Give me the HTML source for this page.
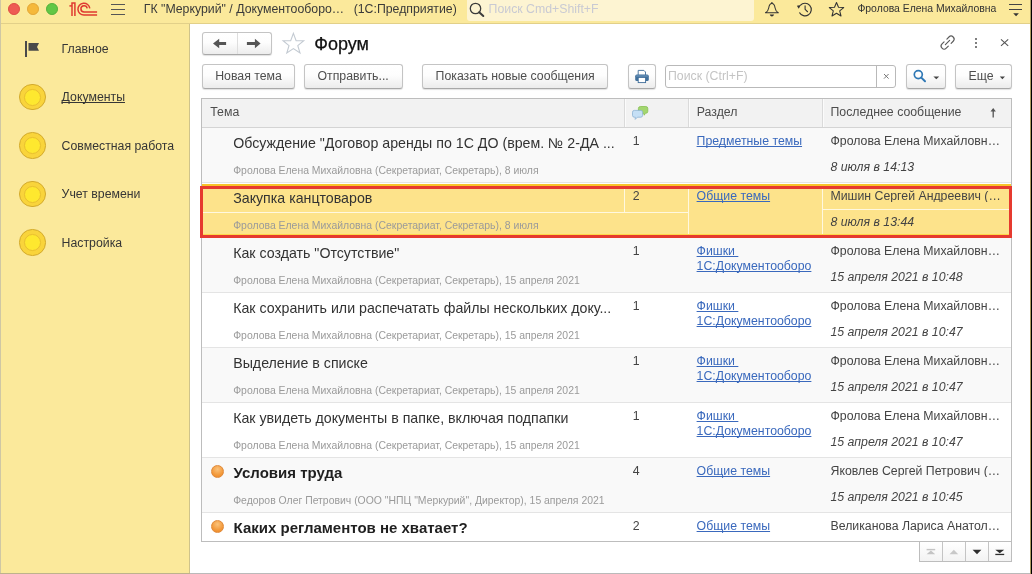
<!DOCTYPE html>
<html><head><meta charset="utf-8">
<style>
html,body{margin:0;padding:0;width:1032px;height:574px;overflow:hidden;background:#fff;}
body{position:relative;font-family:"Liberation Sans",sans-serif;}
.t{position:absolute;white-space:nowrap;text-decoration-skip-ink:none;}
#w{position:absolute;left:0;top:0;width:1032px;height:574px;will-change:transform;}
</style></head><body>
<div id="w"><div style="position:absolute;left:0px;top:0px;width:1032px;height:23px;background:#fbe99b"></div>
<div style="position:absolute;left:0px;top:23px;width:1032px;height:1px;background:#e2d089"></div>
<div style="position:absolute;left:0px;top:0px;width:1px;height:574px;background:#cfc7a4"></div>
<div style="position:absolute;left:8.10px;top:3.1px;width:11.8px;height:11.8px;box-sizing:border-box;border-radius:50%;background:#ee5b53;border:0.6px solid #de4a43"></div>
<div style="position:absolute;left:27.20px;top:3.1px;width:11.8px;height:11.8px;box-sizing:border-box;border-radius:50%;background:#f5b93b;border:0.6px solid #e3a634"></div>
<div style="position:absolute;left:46.20px;top:3.1px;width:11.8px;height:11.8px;box-sizing:border-box;border-radius:50%;background:#62c745;border:0.6px solid #52b039"></div>
<svg style="position:absolute;left:66px;top:0px" width="34" height="18" viewBox="66 0 34 18">
<g fill="none" stroke="#df3a31" stroke-width="1.5">
<path d="M69.4 5.9 H72"/>
<path d="M72 15.9 V2.95 H74.9 V15.9"/>
<path d="M89.8 8.4 A5.95 5.95 0 1 0 84 15.1 H97.1"/>
<path d="M87.2 8.4 A3.15 3.15 0 1 0 84 11.95 H97.1"/>
</g></svg>
<div style="position:absolute;left:110.5px;top:4.2px;width:14px;height:1.3px;background:#555"></div>
<div style="position:absolute;left:110.5px;top:9px;width:14px;height:1.3px;background:#555"></div>
<div style="position:absolute;left:110.5px;top:13.8px;width:14px;height:1.3px;background:#555"></div>
<div class="t" style="left:143.80px;top:3px;font-size:12.3px;line-height:12.3px;color:#3a3a3a;">ГК "Меркурий" / Документооборо…</div>
<div class="t" style="left:353.70px;top:3px;font-size:12.3px;line-height:12.3px;color:#3a3a3a;">(1С:Предприятие)</div>
<div style="position:absolute;left:467px;top:0px;width:286.5px;height:21px;background:#fdf4d2;border-radius:0 0 3px 3px"></div>
<svg style="position:absolute;left:468px;top:1px" width="18" height="18" viewBox="0 0 18 18">
<circle cx="7.5" cy="7.5" r="5.2" fill="none" stroke="#3c3c3c" stroke-width="1.3"/>
<path d="M11.2 11.2 L15.3 15" stroke="#3c3c3c" stroke-width="2" stroke-linecap="round"/></svg>
<div class="t" style="left:488.60px;top:3px;font-size:12.3px;line-height:12.3px;color:#c9cad3;">Поиск Cmd+Shift+F</div>
<svg style="position:absolute;left:760px;top:0px" width="24" height="20" viewBox="760 0 24 20">
<circle cx="771.9" cy="2.9" r="0.8" fill="#333"/>
<path d="M771.9 3.5 C769.7 3.5 769.1 5.4 768.7 8 C768.3 10.5 767.2 11.8 765.5 12.8 H778.3 C776.6 11.8 775.5 10.5 775.1 8 C774.7 5.4 774.1 3.5 771.9 3.5 Z" fill="none" stroke="#333" stroke-width="1.05" stroke-linejoin="round"/>
<path d="M769.7 14.4 H774.1 Q773.4 16.5 771.9 16.6 Q770.4 16.5 769.7 14.4 Z" fill="#333"/></svg>
<svg style="position:absolute;left:794px;top:0px" width="20" height="20" viewBox="794 0 20 20">
<path d="M800.3 5.3 A6.3 6.3 0 1 1 799.4 12.5" fill="none" stroke="#333" stroke-width="1.15"/>
<path d="M796.9 5.7 L800.9 4.9 L798.7 8.7 Z" fill="#333"/>
<path d="M805.1 5.6 V9.3 L807.8 12" fill="none" stroke="#333" stroke-width="1.1"/></svg>
<svg style="position:absolute;left:828px;top:1px" width="17" height="17" viewBox="0 0 17 17">
<path d="M8.5 1.5 L10.5 6.3 L15.7 6.6 L11.7 9.9 L13 15 L8.5 12.2 L4 15 L5.3 9.9 L1.3 6.6 L6.5 6.3 Z" fill="none" stroke="#333" stroke-width="1.05" stroke-linejoin="round"/></svg>
<div class="t" style="left:857.40px;top:4px;font-size:10.43px;line-height:10.43px;color:#333;">Фролова Елена Михайловна</div>
<div style="position:absolute;left:1009px;top:4px;width:13px;height:1.3px;background:#444"></div>
<div style="position:absolute;left:1009px;top:8.5px;width:13px;height:1.3px;background:#444"></div>
<svg style="position:absolute;left:1012px;top:12px" width="8" height="5" viewBox="0 0 8 5"><path d="M1.2 1.2 H6.9 L4.05 4.3 Z" fill="#333"/></svg>
<div style="position:absolute;left:1px;top:24px;width:188px;height:549px;background:#fbe99b"></div>
<div style="position:absolute;left:189px;top:24px;width:1px;height:549px;background:#cfc38b"></div>
<div style="position:absolute;left:25.3px;top:41px;width:2px;height:15.5px;background:#4a4a4a"></div>
<svg style="position:absolute;left:28px;top:43px" width="12" height="8" viewBox="0 0 12 8"><path d="M0.5 0 H11 L9 3.9 L11 7.8 H0.5 Z" fill="#4a4a4a"/></svg>
<div class="t" style="left:61.60px;top:43px;font-size:12.3px;line-height:12.3px;color:#363636;">Главное</div>
<div class="t" style="left:61.60px;top:91px;font-size:12.3px;line-height:12.3px;color:#363636;text-decoration:underline;text-underline-offset:0.5px">Документы</div>
<div style="position:absolute;left:19.15px;top:83.95px;width:24.5px;height:24.5px;border-radius:50%;background:#f9d43b;border:1px solid #d3aa2c"></div>
<div style="position:absolute;left:23.90px;top:88.80px;width:16.8px;height:16.8px;box-sizing:border-box;border-radius:50%;background:#fee82f;border:0.9px solid #e9bf30"></div>
<div class="t" style="left:61.60px;top:140px;font-size:12.3px;line-height:12.3px;color:#363636;">Совместная работа</div>
<div style="position:absolute;left:19.15px;top:132.45px;width:24.5px;height:24.5px;border-radius:50%;background:#f9d43b;border:1px solid #d3aa2c"></div>
<div style="position:absolute;left:23.90px;top:137.30px;width:16.8px;height:16.8px;box-sizing:border-box;border-radius:50%;background:#fee82f;border:0.9px solid #e9bf30"></div>
<div class="t" style="left:61.60px;top:188px;font-size:12.3px;line-height:12.3px;color:#363636;">Учет времени</div>
<div style="position:absolute;left:19.15px;top:180.95px;width:24.5px;height:24.5px;border-radius:50%;background:#f9d43b;border:1px solid #d3aa2c"></div>
<div style="position:absolute;left:23.90px;top:185.80px;width:16.8px;height:16.8px;box-sizing:border-box;border-radius:50%;background:#fee82f;border:0.9px solid #e9bf30"></div>
<div class="t" style="left:61.60px;top:237px;font-size:12.3px;line-height:12.3px;color:#363636;">Настройка</div>
<div style="position:absolute;left:19.15px;top:229.45px;width:24.5px;height:24.5px;border-radius:50%;background:#f9d43b;border:1px solid #d3aa2c"></div>
<div style="position:absolute;left:23.90px;top:234.30px;width:16.8px;height:16.8px;box-sizing:border-box;border-radius:50%;background:#fee82f;border:0.9px solid #e9bf30"></div>
<div style="position:absolute;left:201.5px;top:32px;width:70px;height:22.5px;background:linear-gradient(#ffffff,#fdfdfd 45%,#ececec);border:1px solid #c4c4c4;border-bottom-color:#a8a8a8;border-radius:3px;box-shadow:0 1px 1px rgba(0,0,0,0.12);box-sizing:border-box;"></div>
<div style="position:absolute;left:237px;top:33px;width:1px;height:21px;background:#dedede"></div>
<svg style="position:absolute;left:210px;top:36px" width="20" height="15" viewBox="210 36 20 15"><path d="M213 43.5 L219.2 38.7 V42 H226.1 V45 H219.2 V48.3 Z" fill="#555"/></svg>
<svg style="position:absolute;left:244px;top:36px" width="20" height="15" viewBox="244 36 20 15"><path d="M260.6 43.5 L254.9 38.7 V42 H246.9 V45 H254.9 V48.3 Z" fill="#555"/></svg>
<svg style="position:absolute;left:280px;top:31px" width="26" height="25" viewBox="280 31 26 25"><path d="M293.4 33.4 L296.1 40.6 L303.7 40.8 L297.8 45.6 L300 53 L293.4 48.6 L286.8 53 L289 45.6 L283.1 40.8 L290.7 40.6 Z" fill="none" stroke="#c3cad2" stroke-width="1.1" stroke-linejoin="miter"/></svg>
<div class="t" style="left:314.30px;top:35px;font-size:18px;line-height:18px;color:#111;-webkit-text-stroke:0.25px #111">Форум</div>
<svg style="position:absolute;left:936px;top:31px" width="24" height="23" viewBox="936 31 24 23"><g transform="translate(947.6 42.6) rotate(-45)" fill="none" stroke="#5a5a5a" stroke-width="1.15" stroke-linecap="round"><path d="M-2 -3 H-4.9 A3 3 0 0 0 -4.9 3 H-2"/><path d="M2 -3 H4.9 A3 3 0 0 1 4.9 3 H2"/><path d="M-3 -0.15 H3"/></g></svg>
<div style="position:absolute;left:974.6999999999999px;top:37.699999999999996px;width:2.4px;height:2.4px;border-radius:50%;background:#555"></div>
<div style="position:absolute;left:974.6999999999999px;top:41.8px;width:2.4px;height:2.4px;border-radius:50%;background:#555"></div>
<div style="position:absolute;left:974.6999999999999px;top:45.699999999999996px;width:2.4px;height:2.4px;border-radius:50%;background:#555"></div>
<svg style="position:absolute;left:999px;top:38px" width="11" height="9" viewBox="999 38 11 9"><path d="M1001 39.4 L1008.2 45.9 M1008.2 39.4 L1001 45.9" stroke="#555" stroke-width="1.1"/></svg>
<div style="position:absolute;left:201.5px;top:64.3px;width:93.0px;height:24.4px;background:linear-gradient(#ffffff,#fdfdfd 45%,#ececec);border:1px solid #c4c4c4;border-bottom-color:#a8a8a8;border-radius:3px;box-shadow:0 1px 1px rgba(0,0,0,0.12);box-sizing:border-box;"></div>
<div class="t" style="left:215.20px;top:70px;font-size:12.3px;line-height:12.3px;color:#4e4e4e;">Новая тема</div>
<div style="position:absolute;left:303.7px;top:64.3px;width:99.10000000000002px;height:24.4px;background:linear-gradient(#ffffff,#fdfdfd 45%,#ececec);border:1px solid #c4c4c4;border-bottom-color:#a8a8a8;border-radius:3px;box-shadow:0 1px 1px rgba(0,0,0,0.12);box-sizing:border-box;"></div>
<div class="t" style="left:317.50px;top:70px;font-size:12.3px;line-height:12.3px;color:#4e4e4e;">Отправить...</div>
<div style="position:absolute;left:422.3px;top:64.3px;width:185.7px;height:24.4px;background:linear-gradient(#ffffff,#fdfdfd 45%,#ececec);border:1px solid #c4c4c4;border-bottom-color:#a8a8a8;border-radius:3px;box-shadow:0 1px 1px rgba(0,0,0,0.12);box-sizing:border-box;"></div>
<div class="t" style="left:435.60px;top:70px;font-size:12.3px;line-height:12.3px;color:#4e4e4e;">Показать новые сообщения</div>
<div style="position:absolute;left:628.1px;top:64.3px;width:28.100000000000023px;height:24.4px;background:linear-gradient(#ffffff,#fdfdfd 45%,#ececec);border:1px solid #c4c4c4;border-bottom-color:#a8a8a8;border-radius:3px;box-shadow:0 1px 1px rgba(0,0,0,0.12);box-sizing:border-box;"></div>
<svg style="position:absolute;left:633px;top:68px" width="18" height="17" viewBox="633 68 18 17"><path d="M638.2 75 V70.4 H643.9 L645.5 72 V75" fill="#fff" stroke="#3f6d99" stroke-width="0.9"/><rect x="635.2" y="74.6" width="13.6" height="6.4" rx="1.6" fill="#41709c"/><rect x="636.2" y="75.4" width="11.6" height="1.2" fill="#6d95bb"/><rect x="638.2" y="77.4" width="7.4" height="5.2" fill="#fff" stroke="#3f6d99" stroke-width="0.9"/></svg>
<div style="position:absolute;left:665.3px;top:65.2px;width:231.2px;height:22.6px;background:#fff;border:1px solid #b9b9b9;border-radius:3px;box-sizing:border-box"></div>
<div style="position:absolute;left:876.2px;top:66px;width:1px;height:21px;background:#b9b9b9"></div>
<div class="t" style="left:668.00px;top:70px;font-size:12.3px;line-height:12.3px;color:#c4c4c4;">Поиск (Ctrl+F)</div>
<svg style="position:absolute;left:882px;top:72px" width="9" height="9" viewBox="882 72 9 9"><path d="M884 74 L888.6 78.6 M888.6 74 L884 78.6" stroke="#777" stroke-width="1"/></svg>
<div style="position:absolute;left:906.4px;top:64.3px;width:39.200000000000045px;height:24.4px;background:linear-gradient(#ffffff,#fdfdfd 45%,#ececec);border:1px solid #c4c4c4;border-bottom-color:#a8a8a8;border-radius:3px;box-shadow:0 1px 1px rgba(0,0,0,0.12);box-sizing:border-box;"></div>
<svg style="position:absolute;left:912px;top:69px" width="16" height="15" viewBox="912 69 16 15"><circle cx="918.3" cy="74.6" r="4" fill="none" stroke="#2f78b5" stroke-width="1.7"/><path d="M921.3 77.6 L925 81.2" stroke="#2f78b5" stroke-width="2" stroke-linecap="round"/></svg>
<svg style="position:absolute;left:932px;top:75px" width="8" height="5" viewBox="932 75 8 5"><path d="M933.4 76.6 H939.2 L936.3 79.2 Z" fill="#444"/></svg>
<div style="position:absolute;left:955px;top:64.3px;width:56.60000000000002px;height:24.4px;background:linear-gradient(#ffffff,#fdfdfd 45%,#ececec);border:1px solid #c4c4c4;border-bottom-color:#a8a8a8;border-radius:3px;box-shadow:0 1px 1px rgba(0,0,0,0.12);box-sizing:border-box;"></div>
<div class="t" style="left:968.60px;top:70px;font-size:12.3px;line-height:12.3px;color:#4e4e4e;">Еще</div>
<svg style="position:absolute;left:999px;top:75px" width="8" height="5" viewBox="999 75 8 5"><path d="M999.8 76.6 H1005 L1002.4 79.2 Z" fill="#444"/></svg>
<div style="position:absolute;left:201px;top:98px;width:811px;height:444px;background:#fff;border:1px solid #bdbdbd;box-sizing:border-box"></div>
<div style="position:absolute;left:202px;top:99px;width:809px;height:28px;background:#f2f2f2"></div>
<div style="position:absolute;left:202px;top:127px;width:809px;height:1px;background:#d4d4d4"></div>
<div style="position:absolute;left:624px;top:99px;width:1px;height:28px;background:#dadada"></div>
<div style="position:absolute;left:625px;top:99px;width:1px;height:28px;background:#fbfbfb"></div>
<div style="position:absolute;left:688px;top:99px;width:1px;height:28px;background:#dadada"></div>
<div style="position:absolute;left:689px;top:99px;width:1px;height:28px;background:#fbfbfb"></div>
<div style="position:absolute;left:822px;top:99px;width:1px;height:28px;background:#dadada"></div>
<div style="position:absolute;left:823px;top:99px;width:1px;height:28px;background:#fbfbfb"></div>
<div class="t" style="left:210.30px;top:106px;font-size:12.3px;line-height:12.3px;color:#4d4d4d;">Тема</div>
<div class="t" style="left:696.80px;top:106px;font-size:12.3px;line-height:12.3px;color:#4d4d4d;">Раздел</div>
<div class="t" style="left:830.50px;top:106px;font-size:12.3px;line-height:12.3px;color:#4d4d4d;">Последнее сообщение</div>
<svg style="position:absolute;left:988px;top:106px" width="10" height="13" viewBox="988 106 10 13"><path d="M993.2 107.9 L995.9 111.4 H993.85 V117.4 H992.55 V111.4 H990.5 Z" fill="#555"/></svg>
<svg style="position:absolute;left:630px;top:104px" width="20" height="18" viewBox="630 104 20 18"><path d="M640.4 106.5 H645.8 A2 2 0 0 1 647.8 108.5 V111.3 A2 2 0 0 1 645.8 113.3 H645.3 L644.3 115.2 L643.5 113.3 H640.4 A2 2 0 0 1 638.4 111.3 V108.5 A2 2 0 0 1 640.4 106.5 Z" fill="#a3d66f" stroke="#86c052" stroke-width="0.8"/><path d="M634.3 110.4 H640.8 A1.8 1.8 0 0 1 642.6 112.2 V115.4 A1.8 1.8 0 0 1 640.8 117.2 H637.4 L635.2 119.4 L635.3 117.2 H634.3 A1.8 1.8 0 0 1 632.5 115.4 V112.2 A1.8 1.8 0 0 1 634.3 110.4 Z" fill="#c5dff5" stroke="#8db3d3" stroke-width="0.8"/></svg>
<div style="position:absolute;left:202px;top:128px;width:809px;height:412px;overflow:hidden">
<div style="position:absolute;left:0px;top:0px;width:809px;height:54px;background:#f9f9f9"></div>
<div style="position:absolute;left:0px;top:54px;width:809px;height:1px;background:#e4e4e4"></div>
<div class="t" style="left:31.20px;top:8px;font-size:14.2px;line-height:14.2px;color:#333;">Обсуждение "Договор аренды по 1С ДО (врем. № 2-ДА ...</div>
<div class="t" style="left:31.20px;top:38px;font-size:10.43px;line-height:10.43px;color:#9a9a9a;">Фролова Елена Михайловна (Секретариат, Секретарь), 8 июля</div>
<div class="t" style="left:430.80px;top:7px;font-size:12.3px;line-height:12.3px;color:#444;">1</div>
<div class="t" style="left:494.60px;top:7px;font-size:12.3px;line-height:12.3px;color:#3a69bd;text-decoration:underline;text-underline-offset:1px">Предметные темы</div>
<div class="t" style="left:628.5px;top:7px;width:172px;overflow:hidden;text-overflow:ellipsis;font-size:12.3px;line-height:12.3px;color:#444">Фролова Елена Михайловна (Секретариат)</div>
<div class="t" style="left:628.50px;top:33px;font-size:12.3px;line-height:12.3px;color:#444;font-style:italic">8 июля в 14:13</div>
<div style="position:absolute;left:0px;top:55px;width:809px;height:54px;background:#fde38b"></div>
<div style="position:absolute;left:0px;top:109px;width:809px;height:1px;background:#e4e4e4"></div>
<div style="position:absolute;left:0px;top:55px;width:809px;height:1px;background:#ffffff"></div>
<div style="position:absolute;left:0px;top:56px;width:809px;height:2px;background:#f8c42a"></div>
<div style="position:absolute;left:0px;top:106px;width:809px;height:1px;background:#fdd84a"></div>
<div style="position:absolute;left:422px;top:58px;width:1px;height:26px;background:#fff8e0"></div>
<div style="position:absolute;left:0px;top:84px;width:486px;height:1px;background:#fff8e0"></div>
<div style="position:absolute;left:486px;top:58px;width:1px;height:48px;background:#fff8e0"></div>
<div style="position:absolute;left:620px;top:58px;width:1px;height:48px;background:#fff8e0"></div>
<div style="position:absolute;left:621px;top:81px;width:188px;height:1px;background:#fff8e0"></div>
<div class="t" style="left:31.20px;top:63px;font-size:14.2px;line-height:14.2px;color:#333;">Закупка канцтоваров</div>
<div class="t" style="left:31.20px;top:93px;font-size:10.43px;line-height:10.43px;color:#9a9a9a;">Фролова Елена Михайловна (Секретариат, Секретарь), 8 июля</div>
<div class="t" style="left:430.80px;top:62px;font-size:12.3px;line-height:12.3px;color:#444;">2</div>
<div class="t" style="left:494.60px;top:62px;font-size:12.3px;line-height:12.3px;color:#3a69bd;text-decoration:underline;text-underline-offset:1px">Общие темы</div>
<div class="t" style="left:628.5px;top:62px;width:172px;overflow:hidden;text-overflow:ellipsis;font-size:12.3px;line-height:12.3px;color:#444">Мишин Сергей Андреевич (Секретариат)</div>
<div class="t" style="left:628.50px;top:88px;font-size:12.3px;line-height:12.3px;color:#444;font-style:italic">8 июля в 13:44</div>
<div style="position:absolute;left:0px;top:110px;width:809px;height:54px;background:#f9f9f9"></div>
<div style="position:absolute;left:0px;top:164px;width:809px;height:1px;background:#e4e4e4"></div>
<div class="t" style="left:31.20px;top:118px;font-size:14.2px;line-height:14.2px;color:#333;">Как создать "Отсутствие"</div>
<div class="t" style="left:31.20px;top:148px;font-size:10.43px;line-height:10.43px;color:#9a9a9a;">Фролова Елена Михайловна (Секретариат, Секретарь), 15 апреля 2021</div>
<div class="t" style="left:430.80px;top:117px;font-size:12.3px;line-height:12.3px;color:#444;">1</div>
<div class="t" style="left:494.60px;top:117px;font-size:12.3px;line-height:12.3px;color:#3a69bd;text-decoration:underline;text-underline-offset:1px">Фишки&nbsp;</div>
<div class="t" style="left:494.60px;top:132px;font-size:12.3px;line-height:12.3px;color:#3a69bd;text-decoration:underline;text-underline-offset:1px">1С:Документооборо</div>
<div class="t" style="left:628.5px;top:117px;width:172px;overflow:hidden;text-overflow:ellipsis;font-size:12.3px;line-height:12.3px;color:#444">Фролова Елена Михайловна (Секретариат)</div>
<div class="t" style="left:628.50px;top:143px;font-size:12.3px;line-height:12.3px;color:#444;font-style:italic">15 апреля 2021 в 10:48</div>
<div style="position:absolute;left:0px;top:165px;width:809px;height:54px;background:#ffffff"></div>
<div style="position:absolute;left:0px;top:219px;width:809px;height:1px;background:#e4e4e4"></div>
<div class="t" style="left:31.20px;top:173px;font-size:14.2px;line-height:14.2px;color:#333;">Как сохранить или распечатать файлы нескольких доку...</div>
<div class="t" style="left:31.20px;top:203px;font-size:10.43px;line-height:10.43px;color:#9a9a9a;">Фролова Елена Михайловна (Секретариат, Секретарь), 15 апреля 2021</div>
<div class="t" style="left:430.80px;top:172px;font-size:12.3px;line-height:12.3px;color:#444;">1</div>
<div class="t" style="left:494.60px;top:172px;font-size:12.3px;line-height:12.3px;color:#3a69bd;text-decoration:underline;text-underline-offset:1px">Фишки&nbsp;</div>
<div class="t" style="left:494.60px;top:187px;font-size:12.3px;line-height:12.3px;color:#3a69bd;text-decoration:underline;text-underline-offset:1px">1С:Документооборо</div>
<div class="t" style="left:628.5px;top:172px;width:172px;overflow:hidden;text-overflow:ellipsis;font-size:12.3px;line-height:12.3px;color:#444">Фролова Елена Михайловна (Секретариат)</div>
<div class="t" style="left:628.50px;top:198px;font-size:12.3px;line-height:12.3px;color:#444;font-style:italic">15 апреля 2021 в 10:47</div>
<div style="position:absolute;left:0px;top:220px;width:809px;height:54px;background:#f9f9f9"></div>
<div style="position:absolute;left:0px;top:274px;width:809px;height:1px;background:#e4e4e4"></div>
<div class="t" style="left:31.20px;top:228px;font-size:14.2px;line-height:14.2px;color:#333;">Выделение в списке</div>
<div class="t" style="left:31.20px;top:258px;font-size:10.43px;line-height:10.43px;color:#9a9a9a;">Фролова Елена Михайловна (Секретариат, Секретарь), 15 апреля 2021</div>
<div class="t" style="left:430.80px;top:227px;font-size:12.3px;line-height:12.3px;color:#444;">1</div>
<div class="t" style="left:494.60px;top:227px;font-size:12.3px;line-height:12.3px;color:#3a69bd;text-decoration:underline;text-underline-offset:1px">Фишки&nbsp;</div>
<div class="t" style="left:494.60px;top:242px;font-size:12.3px;line-height:12.3px;color:#3a69bd;text-decoration:underline;text-underline-offset:1px">1С:Документооборо</div>
<div class="t" style="left:628.5px;top:227px;width:172px;overflow:hidden;text-overflow:ellipsis;font-size:12.3px;line-height:12.3px;color:#444">Фролова Елена Михайловна (Секретариат)</div>
<div class="t" style="left:628.50px;top:253px;font-size:12.3px;line-height:12.3px;color:#444;font-style:italic">15 апреля 2021 в 10:47</div>
<div style="position:absolute;left:0px;top:275px;width:809px;height:54px;background:#ffffff"></div>
<div style="position:absolute;left:0px;top:329px;width:809px;height:1px;background:#e4e4e4"></div>
<div class="t" style="left:31.20px;top:283px;font-size:14.2px;line-height:14.2px;color:#333;">Как увидеть документы в папке, включая подпапки</div>
<div class="t" style="left:31.20px;top:313px;font-size:10.43px;line-height:10.43px;color:#9a9a9a;">Фролова Елена Михайловна (Секретариат, Секретарь), 15 апреля 2021</div>
<div class="t" style="left:430.80px;top:282px;font-size:12.3px;line-height:12.3px;color:#444;">1</div>
<div class="t" style="left:494.60px;top:282px;font-size:12.3px;line-height:12.3px;color:#3a69bd;text-decoration:underline;text-underline-offset:1px">Фишки&nbsp;</div>
<div class="t" style="left:494.60px;top:297px;font-size:12.3px;line-height:12.3px;color:#3a69bd;text-decoration:underline;text-underline-offset:1px">1С:Документооборо</div>
<div class="t" style="left:628.5px;top:282px;width:172px;overflow:hidden;text-overflow:ellipsis;font-size:12.3px;line-height:12.3px;color:#444">Фролова Елена Михайловна (Секретариат)</div>
<div class="t" style="left:628.50px;top:308px;font-size:12.3px;line-height:12.3px;color:#444;font-style:italic">15 апреля 2021 в 10:47</div>
<div style="position:absolute;left:0px;top:330px;width:809px;height:54px;background:#f9f9f9"></div>
<div style="position:absolute;left:0px;top:384px;width:809px;height:1px;background:#e4e4e4"></div>
<div class="t" style="left:31.60px;top:337px;font-size:15.0px;line-height:15.0px;color:#1f1f1f;font-weight:bold">Условия труда</div>
<div style="position:absolute;left:9.300000000000011px;top:337.2px;width:13px;height:13px;border-radius:50%;box-sizing:border-box;background:radial-gradient(circle at 50% 30%,#fbc27a,#f39a3c 60%,#ec8424);border:1px solid #e08a3a"></div>
<div class="t" style="left:31.20px;top:368px;font-size:10.43px;line-height:10.43px;color:#9a9a9a;">Федоров Олег Петрович (ООО "НПЦ "Меркурий", Директор), 15 апреля 2021</div>
<div class="t" style="left:430.80px;top:337px;font-size:12.3px;line-height:12.3px;color:#444;">4</div>
<div class="t" style="left:494.60px;top:337px;font-size:12.3px;line-height:12.3px;color:#3a69bd;text-decoration:underline;text-underline-offset:1px">Общие темы</div>
<div class="t" style="left:628.5px;top:337px;width:172px;overflow:hidden;text-overflow:ellipsis;font-size:12.3px;line-height:12.3px;color:#444">Яковлев Сергей Петрович (Администрация)</div>
<div class="t" style="left:628.50px;top:363px;font-size:12.3px;line-height:12.3px;color:#444;font-style:italic">15 апреля 2021 в 10:45</div>
<div style="position:absolute;left:0px;top:385px;width:809px;height:54px;background:#ffffff"></div>
<div style="position:absolute;left:0px;top:439px;width:809px;height:1px;background:#e4e4e4"></div>
<div class="t" style="left:31.60px;top:392px;font-size:15.0px;line-height:15.0px;color:#1f1f1f;font-weight:bold">Каких регламентов не хватает?</div>
<div style="position:absolute;left:9.300000000000011px;top:392.20000000000005px;width:13px;height:13px;border-radius:50%;box-sizing:border-box;background:radial-gradient(circle at 50% 30%,#fbc27a,#f39a3c 60%,#ec8424);border:1px solid #e08a3a"></div>
<div class="t" style="left:430.80px;top:392px;font-size:12.3px;line-height:12.3px;color:#444;">2</div>
<div class="t" style="left:494.60px;top:392px;font-size:12.3px;line-height:12.3px;color:#3a69bd;text-decoration:underline;text-underline-offset:1px">Общие темы</div>
<div class="t" style="left:628.5px;top:392px;width:172px;overflow:hidden;text-overflow:ellipsis;font-size:12.3px;line-height:12.3px;color:#444">Великанова Лариса Анатольевна</div>
</div>
<div style="position:absolute;left:919px;top:542px;width:93px;height:20px;background:linear-gradient(#fff,#f3f3f3);border:1px solid #bdbdbd;border-top:none;box-sizing:border-box"></div>
<div style="position:absolute;left:942px;top:542px;width:1px;height:19px;background:#c4c4c4"></div>
<div style="position:absolute;left:965px;top:542px;width:1px;height:19px;background:#c4c4c4"></div>
<div style="position:absolute;left:988px;top:542px;width:1px;height:19px;background:#c4c4c4"></div>
<svg style="position:absolute;left:919px;top:541px" width="93" height="20" viewBox="919 541 93 20"><path d="M926.6 548.9 H935.2 V550.3 H926.6 Z" fill="#c4c4c4"/><path d="M926.6 554.3 H935.2 L930.9 550.6 Z" fill="#c4c4c4"/><path d="M949.5 554.3 H958.2 L953.85 549.8 Z" fill="#c8c8c8"/><path d="M972.6 549.7 H981.4 L977 554.3 Z" fill="#2e2e2e"/><path d="M995.3 549.7 H1004.2 L999.75 553.2 Z" fill="#2e2e2e"/><path d="M995.3 553.8 H1004.2 V555.1 H995.3 Z" fill="#2e2e2e"/></svg>
<div style="position:absolute;left:200px;top:186px;width:812px;height:52px;box-sizing:border-box;border:3px solid #e63a2f"></div>
<div style="position:absolute;left:0px;top:573px;width:1032px;height:1px;background:#bababa"></div>
<div style="position:absolute;left:0px;top:573px;width:190px;height:1px;background:#bdb38c"></div>
<div style="position:absolute;left:1030px;top:0px;width:1px;height:574px;background:#a99a60"></div>
<div style="position:absolute;left:1031px;top:0px;width:1px;height:574px;background:#000"></div>
</div></body></html>
